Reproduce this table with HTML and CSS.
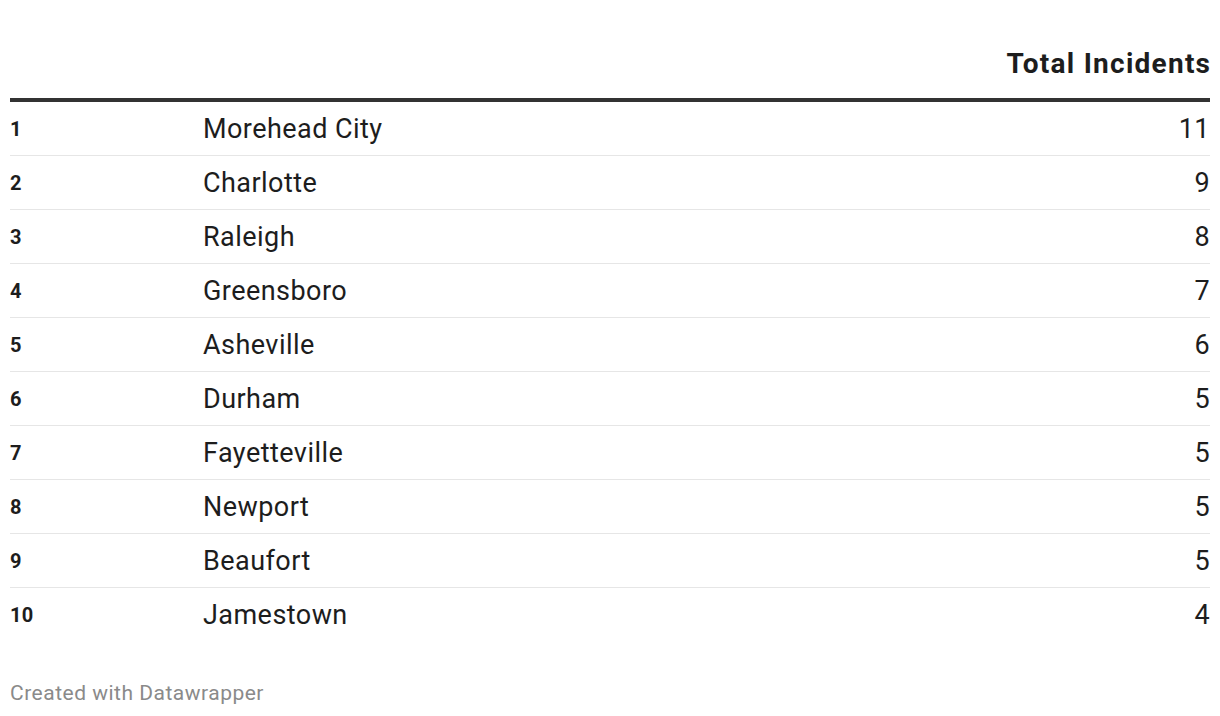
FILE: index.html
```html
<!DOCTYPE html>
<html>
<head>
<meta charset="utf-8">
<link rel="stylesheet" href="styles.css">
</head>
<body>
<div class="chart">
  <table class="tbl">
    <thead>
      <tr>
        <th class="c-rank"></th>
        <th class="c-name"></th>
        <th class="c-val"><span class="hd">Total Incidents</span></th>
      </tr>
    </thead>
    <tbody>
      <tr><td class="c-rank">1</td><td class="c-name">Morehead City</td><td class="c-val">11</td></tr>
      <tr><td class="c-rank">2</td><td class="c-name">Charlotte</td><td class="c-val">9</td></tr>
      <tr><td class="c-rank">3</td><td class="c-name">Raleigh</td><td class="c-val">8</td></tr>
      <tr><td class="c-rank">4</td><td class="c-name">Greensboro</td><td class="c-val">7</td></tr>
      <tr><td class="c-rank">5</td><td class="c-name">Asheville</td><td class="c-val">6</td></tr>
      <tr><td class="c-rank">6</td><td class="c-name">Durham</td><td class="c-val">5</td></tr>
      <tr><td class="c-rank">7</td><td class="c-name">Fayetteville</td><td class="c-val">5</td></tr>
      <tr><td class="c-rank">8</td><td class="c-name">Newport</td><td class="c-val">5</td></tr>
      <tr><td class="c-rank">9</td><td class="c-name">Beaufort</td><td class="c-val">5</td></tr>
      <tr><td class="c-rank">10</td><td class="c-name">Jamestown</td><td class="c-val">4</td></tr>
    </tbody>
  </table>
  <div class="footer">Created with Datawrapper</div>
</div>
</body>
</html>
```

FILE: styles.css
```css
html, body {
  margin: 0;
  padding: 0;
  background: #ffffff;
}
body {
  font-family: Roboto, "Liberation Sans", sans-serif;
  color: #1d1d1d;
}
.chart {
  padding: 46px 10px 0 10px;
}
.tbl {
  width: 100%;
  border-collapse: collapse;
}
.tbl th {
  font-weight: 700;
  font-size: 28px;
  letter-spacing: 1.25px;
  line-height: 36px;
  padding: 0 0 16px 0;
  border-bottom: 4px solid #333333;
  color: #1d1d1d;
}
.hd {
  display: inline-block;
  margin-right: -1.25px;
}
.tbl td {
  height: 53px;
  padding: 0;
  border-bottom: 1px solid #e6e6e6;
  vertical-align: middle;
}
.tbl tbody tr:last-child td {
  border-bottom: none;
}
.c-rank {
  width: 193px;
  text-align: left;
  font-weight: 700;
  font-size: 20px;
  letter-spacing: 0.3px;
}
.c-name {
  text-align: left;
  font-size: 27px;
  letter-spacing: 0.45px;
}
.c-val {
  text-align: right;
  font-size: 27px;
  letter-spacing: 0.45px;
}
.footer {
  margin-top: 40px;
  font-size: 21px;
  letter-spacing: 0.5px;
  color: #8a8a8a;
}
```
